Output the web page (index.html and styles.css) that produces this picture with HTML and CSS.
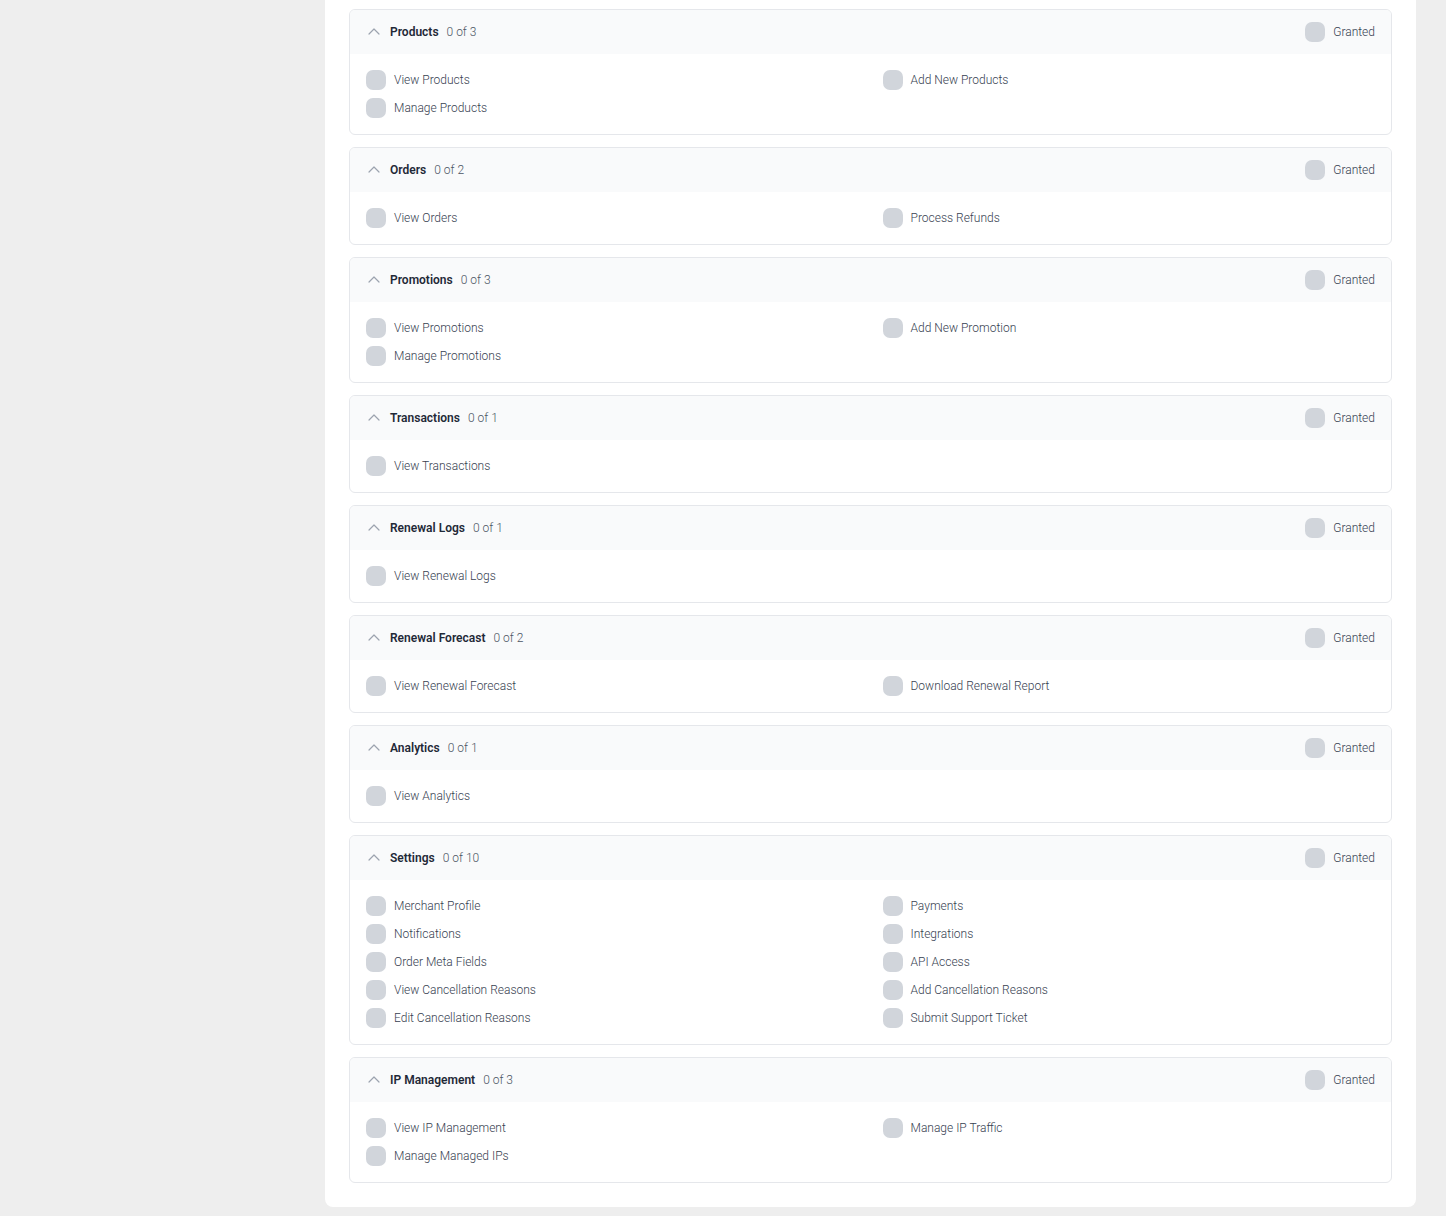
FILE: index.html
```html
<!DOCTYPE html>
<html lang="en">
<head>
<meta charset="utf-8">
<title>Role permissions</title>
<link rel="stylesheet" href="styles.css">
</head>
<body>
<div class="page">
  <div class="spacer"></div>
  <main class="panel">
    <section class="perm-group">
      <header class="group-head">
        <svg class="chev" viewBox="0 0 16 16"><path d="M3 10l5-5 5 5"/></svg>
        <span class="group-title">Products</span>
        <span class="group-count">0 of 3</span>
        <label class="granted"><span class="box"></span>Granted</label>
      </header>
      <div class="group-body">
        <label class="perm"><span class="box"></span>View Products</label>
        <label class="perm"><span class="box"></span>Add New Products</label>
        <label class="perm"><span class="box"></span>Manage Products</label>
      </div>
    </section>

    <section class="perm-group">
      <header class="group-head">
        <svg class="chev" viewBox="0 0 16 16"><path d="M3 10l5-5 5 5"/></svg>
        <span class="group-title">Orders</span>
        <span class="group-count">0 of 2</span>
        <label class="granted"><span class="box"></span>Granted</label>
      </header>
      <div class="group-body">
        <label class="perm"><span class="box"></span>View Orders</label>
        <label class="perm"><span class="box"></span>Process Refunds</label>
      </div>
    </section>

    <section class="perm-group">
      <header class="group-head">
        <svg class="chev" viewBox="0 0 16 16"><path d="M3 10l5-5 5 5"/></svg>
        <span class="group-title">Promotions</span>
        <span class="group-count">0 of 3</span>
        <label class="granted"><span class="box"></span>Granted</label>
      </header>
      <div class="group-body">
        <label class="perm"><span class="box"></span>View Promotions</label>
        <label class="perm"><span class="box"></span>Add New Promotion</label>
        <label class="perm"><span class="box"></span>Manage Promotions</label>
      </div>
    </section>

    <section class="perm-group">
      <header class="group-head">
        <svg class="chev" viewBox="0 0 16 16"><path d="M3 10l5-5 5 5"/></svg>
        <span class="group-title">Transactions</span>
        <span class="group-count">0 of 1</span>
        <label class="granted"><span class="box"></span>Granted</label>
      </header>
      <div class="group-body">
        <label class="perm"><span class="box"></span>View Transactions</label>
      </div>
    </section>

    <section class="perm-group">
      <header class="group-head">
        <svg class="chev" viewBox="0 0 16 16"><path d="M3 10l5-5 5 5"/></svg>
        <span class="group-title">Renewal Logs</span>
        <span class="group-count">0 of 1</span>
        <label class="granted"><span class="box"></span>Granted</label>
      </header>
      <div class="group-body">
        <label class="perm"><span class="box"></span>View Renewal Logs</label>
      </div>
    </section>

    <section class="perm-group">
      <header class="group-head">
        <svg class="chev" viewBox="0 0 16 16"><path d="M3 10l5-5 5 5"/></svg>
        <span class="group-title">Renewal Forecast</span>
        <span class="group-count">0 of 2</span>
        <label class="granted"><span class="box"></span>Granted</label>
      </header>
      <div class="group-body">
        <label class="perm"><span class="box"></span>View Renewal Forecast</label>
        <label class="perm"><span class="box"></span>Download Renewal Report</label>
      </div>
    </section>

    <section class="perm-group">
      <header class="group-head">
        <svg class="chev" viewBox="0 0 16 16"><path d="M3 10l5-5 5 5"/></svg>
        <span class="group-title">Analytics</span>
        <span class="group-count">0 of 1</span>
        <label class="granted"><span class="box"></span>Granted</label>
      </header>
      <div class="group-body">
        <label class="perm"><span class="box"></span>View Analytics</label>
      </div>
    </section>

    <section class="perm-group">
      <header class="group-head">
        <svg class="chev" viewBox="0 0 16 16"><path d="M3 10l5-5 5 5"/></svg>
        <span class="group-title">Settings</span>
        <span class="group-count">0 of 10</span>
        <label class="granted"><span class="box"></span>Granted</label>
      </header>
      <div class="group-body">
        <label class="perm"><span class="box"></span>Merchant Profile</label>
        <label class="perm"><span class="box"></span>Payments</label>
        <label class="perm"><span class="box"></span>Notifications</label>
        <label class="perm"><span class="box"></span>Integrations</label>
        <label class="perm"><span class="box"></span>Order Meta Fields</label>
        <label class="perm"><span class="box"></span>API Access</label>
        <label class="perm"><span class="box"></span>View Cancellation Reasons</label>
        <label class="perm"><span class="box"></span>Add Cancellation Reasons</label>
        <label class="perm"><span class="box"></span>Edit Cancellation Reasons</label>
        <label class="perm"><span class="box"></span>Submit Support Ticket</label>
      </div>
    </section>

    <section class="perm-group">
      <header class="group-head">
        <svg class="chev" viewBox="0 0 16 16"><path d="M3 10l5-5 5 5"/></svg>
        <span class="group-title">IP Management</span>
        <span class="group-count">0 of 3</span>
        <label class="granted"><span class="box"></span>Granted</label>
      </header>
      <div class="group-body">
        <label class="perm"><span class="box"></span>View IP Management</label>
        <label class="perm"><span class="box"></span>Manage IP Traffic</label>
        <label class="perm"><span class="box"></span>Manage Managed IPs</label>
      </div>
    </section>
  </main>
  <div class="spacer-right"></div>
</div>
</body>
</html>
```
FILE: styles.css
```css
html, body {
  margin: 0;
  padding: 0;
  background: #eeeeee;
  font-family: Roboto, "Liberation Sans", Arial, sans-serif;
  font-size: 12px;
  color: #374151;
}

.page {
  display: flex;
  align-items: flex-start;
  padding-bottom: 9px;
}

.spacer {
  width: 325px;
  flex: none;
}

.spacer-right {
  width: 30px;
  flex: none;
}

.panel {
  flex: 1;
  background: #ffffff;
  border-radius: 0 0 8px 8px;
  padding: 9px 24px 24px;
  display: flex;
  flex-direction: column;
  gap: 12px;
}

.perm-group {
  border: 1px solid #e5e7eb;
  border-radius: 6px;
  overflow: hidden;
}

.group-head {
  display: flex;
  align-items: center;
  height: 44px;
  padding: 0 16px;
  background: #f9fafb;
}

.chev {
  width: 16px;
  height: 16px;
  margin-right: 8px;
  fill: none;
  stroke: #9ca3af;
  stroke-width: 1.2;
  stroke-linecap: round;
  stroke-linejoin: round;
}

.group-title {
  font-weight: 600;
  color: #1f2937;
}

.group-count {
  margin-left: 8px;
  font-weight: 300;
  color: #4b5563;
}

.granted {
  margin-left: auto;
  display: flex;
  align-items: center;
  gap: 8px;
  font-weight: 300;
  color: #374151;
}

.box {
  width: 20px;
  height: 20px;
  border-radius: 7px;
  background: #d1d5db;
  flex: none;
}

.group-body {
  display: grid;
  grid-template-columns: 1fr 1fr;
  column-gap: 24px;
  row-gap: 8px;
  padding: 16px;
}

.perm {
  display: flex;
  align-items: center;
  gap: 8px;
  height: 20px;
  font-weight: 300;
  color: #374151;
}
```
